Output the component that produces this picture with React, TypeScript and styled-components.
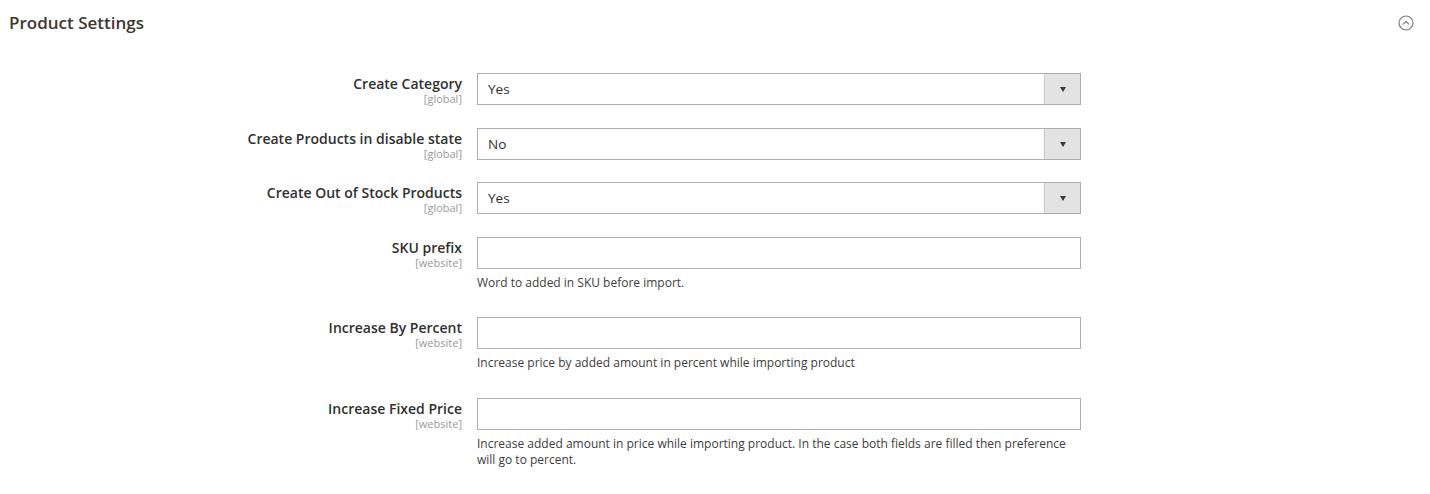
import React from 'react';
import styled, { createGlobalStyle } from 'styled-components';

const GlobalStyle = createGlobalStyle`
  body {
    margin: 0;
    background: #fff;
    font-family: 'Open Sans', 'Noto Sans', sans-serif;
    color: #303030;
  }
`;

const Section = styled.section`
  width: 1430px;
`;

const Header = styled.div`
  display: flex;
  align-items: center;
  justify-content: space-between;
  height: 44px;
  padding: 0 16px 0 9px;
`;

const Title = styled.h2`
  margin: 0;
  font-size: 17px;
  font-weight: 600;
  color: #41362f;
`;

const CollapseIcon = styled.svg`
  width: 16px;
  height: 16px;
  margin-top: 2px;
`;

const Form = styled.div`
  display: flex;
  flex-direction: column;
  gap: 22.5px;
  padding: 29px 0 0 8px;
`;

const Row = styled.div`
  display: grid;
  grid-template-columns: 454px 604px;
  column-gap: 15px;
`;

const LabelCell = styled.div`
  text-align: right;
  padding-top: 2px;
`;

const LabelText = styled.div`
  font-size: 14px;
  font-weight: 600;
  line-height: 17px;
  color: #303030;
`;

const Scope = styled.div`
  font-size: 11px;
  line-height: 13px;
  color: #999;
`;

const Control = styled.div`
  display: flex;
  flex-direction: column;
`;

const SelectBox = styled.div`
  display: flex;
  height: 32px;
  border: 1px solid #adadad;
  box-sizing: border-box;
  background: #fff;
`;

const SelectValue = styled.div`
  flex: 1;
  padding-left: 10px;
  font-size: 13.5px;
  line-height: 30px;
  color: #303030;
`;

const SelectButton = styled.div`
  width: 35px;
  border-left: 1px solid #c8c8c8;
  background: #e3e3e3;
  display: flex;
  align-items: center;
  justify-content: center;
`;

const Arrow = styled.span`
  width: 0;
  height: 0;
  border-left: 3.5px solid transparent;
  border-right: 3.5px solid transparent;
  border-top: 5px solid #41362f;
  margin-top: 1px;
`;

const TextInput = styled.input`
  height: 32px;
  box-sizing: border-box;
  border: 1px solid #adadad;
  margin: 0;
  padding: 0 10px;
  font: inherit;
  font-size: 13px;
  outline: none;
`;

const Note = styled.div`
  margin-top: 6px;
  margin-bottom: 4px;
  font-size: 12px;
  line-height: 16px;
  color: #3d3d3d;
  padding-right: 10px;
`;

type Field = {
  label: string;
  scope: string;
  select?: string;
  note?: string;
};

const fields: Field[] = [
  { label: 'Create Category', scope: '[global]', select: 'Yes' },
  { label: 'Create Products in disable state', scope: '[global]', select: 'No' },
  { label: 'Create Out of Stock Products', scope: '[global]', select: 'Yes' },
  { label: 'SKU prefix', scope: '[website]', note: 'Word to added in SKU before import.' },
  {
    label: 'Increase By Percent',
    scope: '[website]',
    note: 'Increase price by added amount in percent while importing product',
  },
  {
    label: 'Increase Fixed Price',
    scope: '[website]',
    note: 'Increase added amount in price while importing product. In the case both fields are filled then preference will go to percent.',
  },
];

const App: React.FC = () => (
  <>
    <GlobalStyle />
    <Section>
      <Header>
        <Title>Product Settings</Title>
        <CollapseIcon viewBox="0 0 16 16">
          <circle cx="8" cy="8" r="7" fill="none" stroke="#7a7a7a" strokeWidth="1.2" />
          <path d="M5 9.4 L8 6.6 L11 9.4" fill="none" stroke="#7a7a7a" strokeWidth="1.2" />
        </CollapseIcon>
      </Header>
      <Form>
        {fields.map(f => (
          <Row key={f.label}>
            <LabelCell>
              <LabelText>{f.label}</LabelText>
              <Scope>{f.scope}</Scope>
            </LabelCell>
            <Control>
              {f.select ? (
                <SelectBox>
                  <SelectValue>{f.select}</SelectValue>
                  <SelectButton>
                    <Arrow />
                  </SelectButton>
                </SelectBox>
              ) : (
                <TextInput type="text" />
              )}
              {f.note && <Note>{f.note}</Note>}
            </Control>
          </Row>
        ))}
      </Form>
    </Section>
  </>
);

export default App;
